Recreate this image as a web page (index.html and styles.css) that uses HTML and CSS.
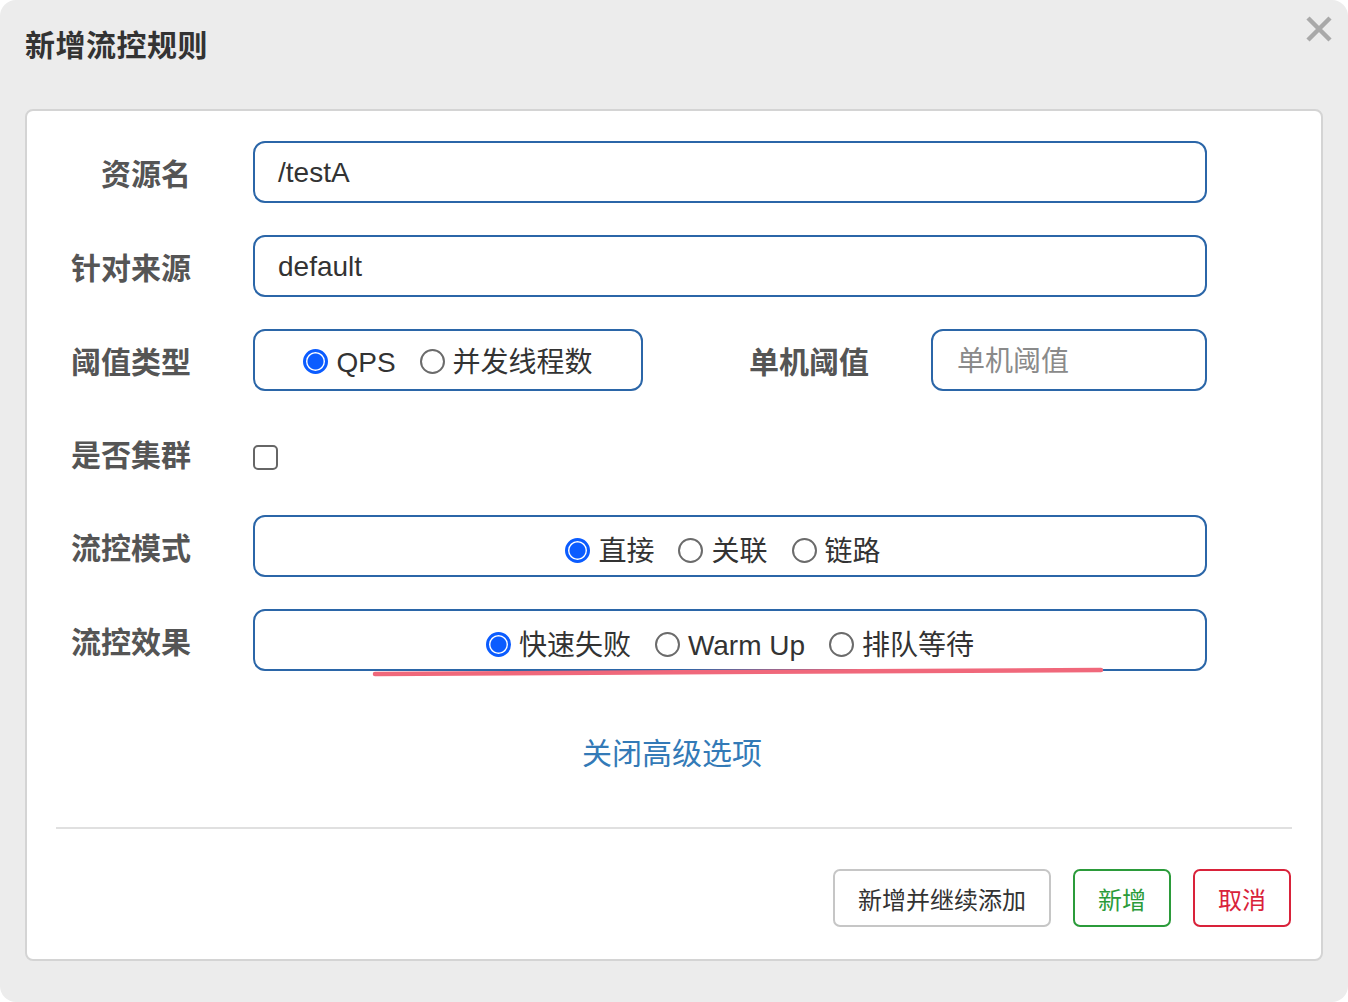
FILE: index.html
```html
<!DOCTYPE html>
<html lang="zh-CN">
<head>
<meta charset="utf-8">
<title>新增流控规则</title>
<link rel="stylesheet" href="styles.css">
</head>
<body>
<div class="dialog">
  <h1 class="title">新增流控规则</h1>
  <svg class="close" viewBox="0 0 28 28" width="28" height="28" aria-label="关闭">
    <path d="M3 3 L25 25 M25 3 L3 25" stroke="#a9a9a9" stroke-width="4.5" stroke-linecap="butt"/>
  </svg>
  <div class="panel">
    <div class="form">
      <div class="row">
        <div class="label">资源名</div>
        <div class="field input">/testA</div>
      </div>
      <div class="row">
        <div class="label">针对来源</div>
        <div class="field input">default</div>
      </div>
      <div class="row">
        <div class="label">阈值类型</div>
        <div class="split">
          <div class="field radios short">
            <span class="opt"><span class="radio on"></span>QPS</span>
            <span class="opt"><span class="radio"></span>并发线程数</span>
          </div>
          <div class="label sublabel">单机阈值</div>
          <div class="field input small placeholder">单机阈值</div>
        </div>
      </div>
      <div class="row row-check">
        <div class="label">是否集群</div>
        <div class="checkbox-wrap"><span class="checkbox"></span></div>
      </div>
      <div class="row">
        <div class="label">流控模式</div>
        <div class="field radios low mode">
          <span class="opt"><span class="radio on"></span>直接</span>
          <span class="opt"><span class="radio"></span>关联</span>
          <span class="opt"><span class="radio"></span>链路</span>
        </div>
      </div>
      <div class="row">
        <div class="label">流控效果</div>
        <div class="field radios low effect">
          <span class="opt"><span class="radio on"></span>快速失败</span>
          <span class="opt"><span class="radio"></span>Warm Up</span>
          <span class="opt"><span class="radio"></span>排队等待</span>
          <svg class="mark" width="740" height="12" viewBox="0 0 740 12">
            <path d="M4 7 Q 370 5 730 3" stroke="#f0687b" stroke-width="4.5" fill="none" stroke-linecap="round"/>
          </svg>
        </div>
      </div>
    </div>
    <div class="toggle"><a class="link">关闭高级选项</a></div>
    <div class="divider"></div>
    <div class="actions">
      <button class="btn btn-default">新增并继续添加</button>
      <button class="btn btn-ok">新增</button>
      <button class="btn btn-cancel">取消</button>
    </div>
  </div>
</div>
</body>
</html>
```
FILE: styles.css
```css
* { box-sizing: border-box; }
html, body {
  margin: 0;
  padding: 0;
  background: #ffffff;
}
body {
  font-family: "Liberation Sans", "Noto Sans CJK SC", sans-serif;
  color: #333;
}
.dialog {
  position: relative;
  width: 1348px;
  height: 1002px;
  background: #ececec;
  border-radius: 16px;
  padding-top: 23px;
  overflow: hidden;
}
.title {
  margin: 0;
  padding-left: 25px;
  font-size: 30px;
  line-height: 40px;
  font-weight: bold;
  color: #333;
  font-family: "Noto Sans CJK SC", sans-serif;
  letter-spacing: 0.5px;
}
.close {
  position: absolute;
  left: 1305px;
  top: 15px;
}
.panel {
  position: relative;
  margin: 46px 25px 0;
  height: 852px;
  background: #fff;
  border: 2px solid #d4d4d4;
  border-radius: 8px;
  padding-top: 30px;
}
.form {
  display: flex;
  flex-direction: column;
  gap: 32px;
}
.row {
  display: grid;
  grid-template-columns: 164px 954px;
  column-gap: 62px;
  align-items: center;
  height: 62px;
}
.row-check { height: 60px; }
.label {
  text-align: right;
  font-size: 30px;
  font-weight: bold;
  color: #555;
  font-family: "Noto Sans CJK SC", sans-serif;
  line-height: 40px;
}
.field {
  height: 62px;
  border: 2px solid #2b66a8;
  border-radius: 12px;
  background: #fff;
}
.input {
  display: flex;
  align-items: center;
  padding-left: 23px;
  font-size: 28px;
  color: #333;
  padding-top: 2px;
}
.placeholder {
  color: #8a8a8a;
  font-family: "Noto Sans CJK SC", sans-serif;
  font-size: 28px;
  padding-left: 24px;
  padding-top: 0;
  padding-bottom: 2px;
}
.split {
  display: flex;
  align-items: center;
}
.short { width: 390px; }
.sublabel {
  flex: 1;
  margin-right: 62px;
}
.small { width: 276px; }
.radios {
  display: flex;
  align-items: center;
  justify-content: center;
  gap: 24px;
  font-size: 28px;
  color: #333;
  position: relative;
}
.low { padding-top: 12px; }
.mode { padding-right: 14px; }
.short { padding-top: 6px; }
.opt {
  display: inline-flex;
  align-items: center;
  gap: 8px;
  line-height: 36px;
}
.radio {
  display: inline-block;
  width: 25px;
  height: 25px;
  border-radius: 50%;
  border: 2px solid #6b6b6b;
  background: #fff;
  flex: none;
  margin-top: -4px;
}
.radio.on {
  border: 3px solid #0b5cff;
  background: radial-gradient(circle, #0b5cff 0 7.5px, #fff 8.5px);
}
.mark {
  position: absolute;
  left: 116px;
  top: 56px;
}
.checkbox-wrap {
  height: 60px;
  display: flex;
  align-items: flex-start;
  padding-top: 22px;
}
.checkbox {
  display: inline-block;
  width: 25px;
  height: 25px;
  border: 2px solid #666;
  border-radius: 5px;
  background: #fff;
}
.toggle {
  margin-top: 60px;
  text-align: center;
  line-height: 40px;
}
.link {
  font-size: 30px;
  color: #337ab7;
  font-family: "Noto Sans CJK SC", sans-serif;
  margin-right: 4px;
}
.divider {
  margin: 48px 29px 0;
  height: 2px;
  background: #e0e0e0;
}
.actions {
  margin-top: 40px;
  margin-right: 30px;
  display: flex;
  justify-content: flex-end;
  gap: 22px;
}
.btn {
  height: 58px;
  padding: 0 23px;
  background: #fff;
  border: 2px solid #c6c6c6;
  border-radius: 7px;
  font-size: 24px;
  font-family: "Noto Sans CJK SC", sans-serif;
  color: #333;
}
.btn-ok {
  border-color: #2b9b3a;
  color: #2b9b3a;
}
.btn-cancel {
  border-color: #d9223a;
  color: #d9223a;
}
```
